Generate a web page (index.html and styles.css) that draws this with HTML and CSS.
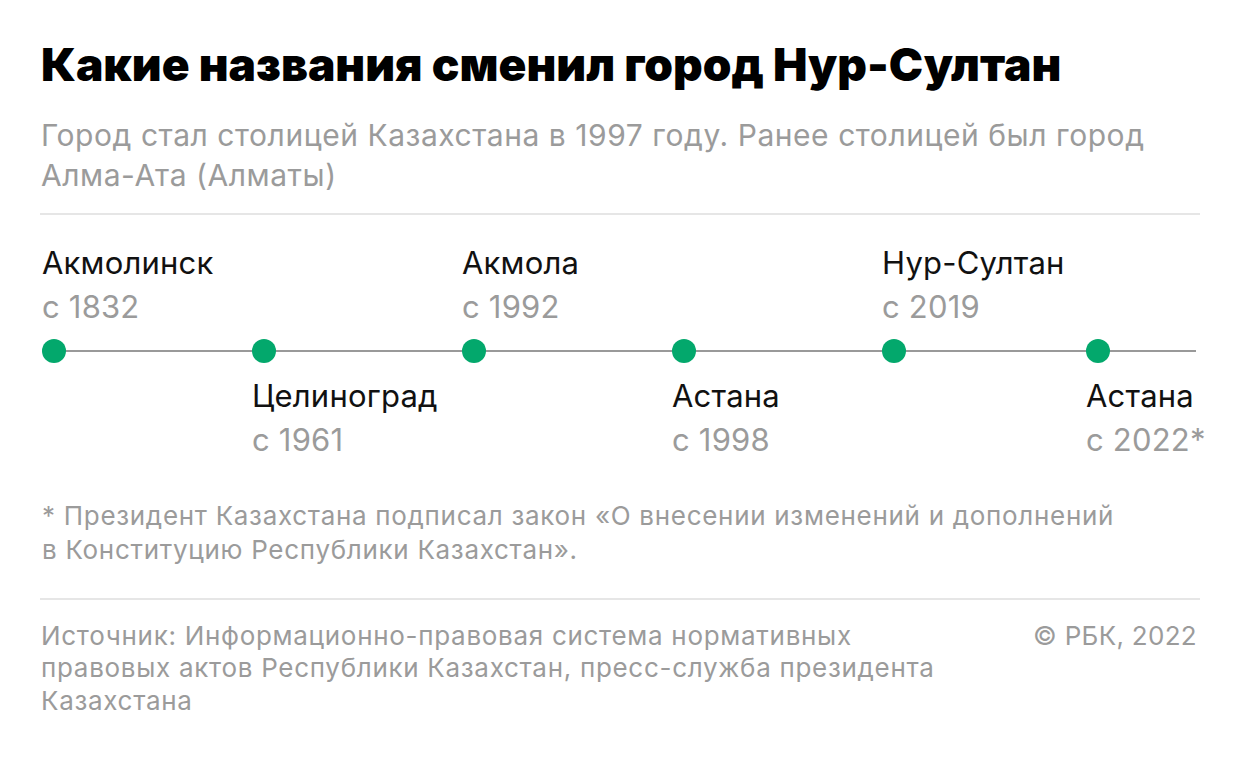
FILE: index.html
```html
<!DOCTYPE html>
<html lang="ru">
<head>
<meta charset="utf-8">
<title>Какие названия сменил город Нур-Султан</title>
<link rel="stylesheet" href="styles.css">
</head>
<body>
<main class="card">
  <header class="head">
    <h1 class="title">Какие названия сменил город Нур-Султан</h1>
    <p class="subtitle">Город стал столицей Казахстана в 1997 году. Ранее столицей был город<br>Алма-Ата (Алматы)</p>
  </header>
  <hr class="sep">
  <section class="timeline">
    <div class="row row-top">
      <div class="item c1"><div class="name">Акмолинск</div><div class="year">с 1832</div></div>
      <div class="item c3"><div class="name">Акмола</div><div class="year">с 1992</div></div>
      <div class="item c5"><div class="name">Нур-Султан</div><div class="year">с 2019</div></div>
    </div>
    <div class="row row-dots">
      <span class="dot c1"></span>
      <span class="dot c2"></span>
      <span class="dot c3"></span>
      <span class="dot c4"></span>
      <span class="dot c5"></span>
      <span class="dot c6"></span>
    </div>
    <div class="row row-bottom">
      <div class="item c2"><div class="name">Целиноград</div><div class="year">с 1961</div></div>
      <div class="item c4"><div class="name">Астана</div><div class="year">с 1998</div></div>
      <div class="item c6"><div class="name">Астана</div><div class="year">с 2022*</div></div>
    </div>
  </section>
  <p class="note">* Президент Казахстана подписал закон «О внесении изменений и дополнений<br>в Конституцию Республики Казахстан».</p>
  <hr class="sep sep-foot">
  <footer class="foot">
    <p class="source">Источник: Информационно-правовая система нормативных<br>правовых актов Республики Казахстан, пресс-служба президента<br>Казахстана</p>
    <p class="copy">© РБК, 2022</p>
  </footer>
</main>
</body>
</html>
```
FILE: styles.css
```css
html, body {
  margin: 0;
  padding: 0;
  background: #ffffff;
}
body {
  font-family: Inter, Roboto, "Liberation Sans", Arial, sans-serif;
  color: #000;
}
.card {
  width: 1160px;
  padding: 39px 40px 0 40px;
}
.head {
  padding-left: 1px;
}
.title {
  margin: 0;
  font-size: 46px;
  line-height: 50px;
  font-weight: 900;
  color: #000;
}
.subtitle {
  margin: 26px 0 0 0;
  font-size: 30px;
  line-height: 40px;
  font-weight: 400;
  letter-spacing: 0.55px;
  color: #9b9b9b;
}
.sep {
  margin: 18px 0 0 0;
  border: 0;
  height: 2px;
  background: #e6e6e6;
}
.timeline {
  margin-top: 25.7px;
  padding-left: 2px;
}
.row {
  display: grid;
  grid-template-columns: 210px 210px 210px 210px 204px 1fr;
}
.c1 { grid-column: 1; }
.c2 { grid-column: 2; }
.c3 { grid-column: 3; }
.c4 { grid-column: 4; }
.c5 { grid-column: 5; }
.c6 { grid-column: 6; }
.item {
  font-size: 31px;
  line-height: 44px;
  letter-spacing: 0.2px;
  white-space: nowrap;
}
.name {
  color: #111;
}
.year {
  color: #9b9b9b;
}
.row-dots {
  margin-top: 10.3px;
  height: 24px;
  background: linear-gradient(#999999, #999999) no-repeat;
  background-size: 1142px 2px;
  background-position: 12px 11px;
}
.dot {
  width: 24px;
  height: 24px;
  border-radius: 50%;
  background: #03a86c;
}
.row-bottom {
  margin-top: 10.7px;
}
.note {
  margin: 37.5px 0 0 2px;
  font-size: 26px;
  line-height: 34px;
  letter-spacing: 0.7px;
  color: #9b9b9b;
}
.sep-foot {
  margin-top: 30.8px;
}
.foot {
  display: flex;
  justify-content: space-between;
  align-items: flex-start;
  margin-top: 20px;
}
.source {
  margin: 0 0 0 1px;
  font-size: 26px;
  line-height: 32.5px;
  letter-spacing: 0.7px;
  color: #9b9b9b;
}
.copy {
  margin: 0 3px 0 0;
  font-size: 26px;
  line-height: 32.5px;
  letter-spacing: 0.3px;
  color: #9b9b9b;
}
```
